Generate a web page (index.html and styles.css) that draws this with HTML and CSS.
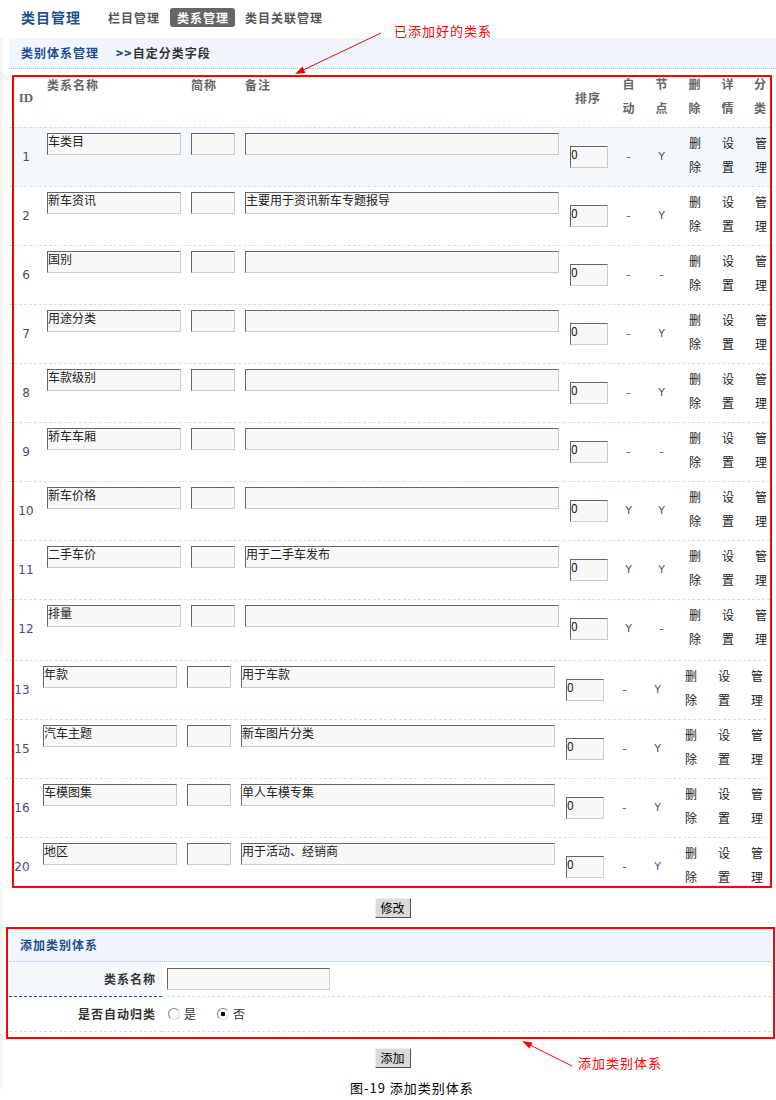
FILE: index.html
```html
<!DOCTYPE html>
<html lang="zh-CN">
<head>
<meta charset="utf-8">
<title>类目管理</title>
<link rel="stylesheet" href="styles.css">
</head>
<body>
<div class="page">
  <header class="topbar">
    <span class="title">类目管理</span>
    <nav class="tabs">
      <a class="tab">栏目管理</a>
      <a class="tab active">类系管理</a>
      <a class="tab">类目关联管理</a>
    </nav>
  </header>

  <section class="sec1">
    <div class="crumb"><span class="crumb-main">类别体系管理</span><span class="crumb-sub"><b>&gt;&gt;</b>自定分类字段</span></div>
    <div class="grid">
      <div class="row head">
        <div class="c hid">ID</div>
        <div class="c top l4">类系名称</div>
        <div class="c top l5">简称</div>
        <div class="c top l5">备注</div>
        <div class="c">排序</div>
        <div class="c"><div class="stack">自动</div></div>
        <div class="c"><div class="stack">节点</div></div>
        <div class="c"><div class="stack">删除</div></div>
        <div class="c"><div class="stack">详情</div></div>
        <div class="c last"><div class="stack">分类</div></div>
      </div>

      <div class="row hl">
        <div class="c id">1</div>
        <div class="c top l4"><input class="inp w-name" value="车类目"></div>
        <div class="c top l5"><input class="inp w-short" value=""></div>
        <div class="c top l5"><input class="inp w-note" value=""></div>
        <div class="c sort"><input class="inp w-sort" value="0"></div>
        <div class="c dash">-</div>
        <div class="c yes">Y</div>
        <div class="c"><div class="stack">删除</div></div>
        <div class="c"><div class="stack">设置</div></div>
        <div class="c last"><div class="stack">管理</div></div>
      </div>

      <div class="row">
        <div class="c id">2</div>
        <div class="c top l4"><input class="inp w-name" value="新车资讯"></div>
        <div class="c top l5"><input class="inp w-short" value=""></div>
        <div class="c top l5"><input class="inp w-note" value="主要用于资讯新车专题报导"></div>
        <div class="c sort"><input class="inp w-sort" value="0"></div>
        <div class="c dash">-</div>
        <div class="c yes">Y</div>
        <div class="c"><div class="stack">删除</div></div>
        <div class="c"><div class="stack">设置</div></div>
        <div class="c last"><div class="stack">管理</div></div>
      </div>

      <div class="row">
        <div class="c id">6</div>
        <div class="c top l4"><input class="inp w-name" value="国别"></div>
        <div class="c top l5"><input class="inp w-short" value=""></div>
        <div class="c top l5"><input class="inp w-note" value=""></div>
        <div class="c sort"><input class="inp w-sort" value="0"></div>
        <div class="c dash">-</div>
        <div class="c dash">-</div>
        <div class="c"><div class="stack">删除</div></div>
        <div class="c"><div class="stack">设置</div></div>
        <div class="c last"><div class="stack">管理</div></div>
      </div>

      <div class="row">
        <div class="c id">7</div>
        <div class="c top l4"><input class="inp w-name" value="用途分类"></div>
        <div class="c top l5"><input class="inp w-short" value=""></div>
        <div class="c top l5"><input class="inp w-note" value=""></div>
        <div class="c sort"><input class="inp w-sort" value="0"></div>
        <div class="c dash">-</div>
        <div class="c yes">Y</div>
        <div class="c"><div class="stack">删除</div></div>
        <div class="c"><div class="stack">设置</div></div>
        <div class="c last"><div class="stack">管理</div></div>
      </div>

      <div class="row">
        <div class="c id">8</div>
        <div class="c top l4"><input class="inp w-name" value="车款级别"></div>
        <div class="c top l5"><input class="inp w-short" value=""></div>
        <div class="c top l5"><input class="inp w-note" value=""></div>
        <div class="c sort"><input class="inp w-sort" value="0"></div>
        <div class="c dash">-</div>
        <div class="c yes">Y</div>
        <div class="c"><div class="stack">删除</div></div>
        <div class="c"><div class="stack">设置</div></div>
        <div class="c last"><div class="stack">管理</div></div>
      </div>

      <div class="row">
        <div class="c id">9</div>
        <div class="c top l4"><input class="inp w-name" value="轿车车厢"></div>
        <div class="c top l5"><input class="inp w-short" value=""></div>
        <div class="c top l5"><input class="inp w-note" value=""></div>
        <div class="c sort"><input class="inp w-sort" value="0"></div>
        <div class="c dash">-</div>
        <div class="c dash">-</div>
        <div class="c"><div class="stack">删除</div></div>
        <div class="c"><div class="stack">设置</div></div>
        <div class="c last"><div class="stack">管理</div></div>
      </div>

      <div class="row">
        <div class="c id">10</div>
        <div class="c top l4"><input class="inp w-name" value="新车价格"></div>
        <div class="c top l5"><input class="inp w-short" value=""></div>
        <div class="c top l5"><input class="inp w-note" value=""></div>
        <div class="c sort"><input class="inp w-sort" value="0"></div>
        <div class="c yes">Y</div>
        <div class="c yes">Y</div>
        <div class="c"><div class="stack">删除</div></div>
        <div class="c"><div class="stack">设置</div></div>
        <div class="c last"><div class="stack">管理</div></div>
      </div>

      <div class="row">
        <div class="c id">11</div>
        <div class="c top l4"><input class="inp w-name" value="二手车价"></div>
        <div class="c top l5"><input class="inp w-short" value=""></div>
        <div class="c top l5"><input class="inp w-note" value="用于二手车发布"></div>
        <div class="c sort"><input class="inp w-sort" value="0"></div>
        <div class="c yes">Y</div>
        <div class="c yes">Y</div>
        <div class="c"><div class="stack">删除</div></div>
        <div class="c"><div class="stack">设置</div></div>
        <div class="c last"><div class="stack">管理</div></div>
      </div>

      <div class="row">
        <div class="c id">12</div>
        <div class="c top l4"><input class="inp w-name" value="排量"></div>
        <div class="c top l5"><input class="inp w-short" value=""></div>
        <div class="c top l5"><input class="inp w-note" value=""></div>
        <div class="c sort"><input class="inp w-sort" value="0"></div>
        <div class="c yes">Y</div>
        <div class="c dash">-</div>
        <div class="c"><div class="stack">删除</div></div>
        <div class="c"><div class="stack">设置</div></div>
        <div class="c last"><div class="stack">管理</div></div>
      </div>
    </div>
  </section>

  <section class="sec2">
    <div class="grid">
      <div class="row">
        <div class="c id">13</div>
        <div class="c top l4"><input class="inp w-name" value="年款"></div>
        <div class="c top l5"><input class="inp w-short" value=""></div>
        <div class="c top l5"><input class="inp w-note" value="用于车款"></div>
        <div class="c sort"><input class="inp w-sort" value="0"></div>
        <div class="c dash">-</div>
        <div class="c yes">Y</div>
        <div class="c"><div class="stack">删除</div></div>
        <div class="c"><div class="stack">设置</div></div>
        <div class="c last"><div class="stack">管理</div></div>
      </div>

      <div class="row">
        <div class="c id">15</div>
        <div class="c top l4"><input class="inp w-name" value="汽车主题"></div>
        <div class="c top l5"><input class="inp w-short" value=""></div>
        <div class="c top l5"><input class="inp w-note" value="新车图片分类"></div>
        <div class="c sort"><input class="inp w-sort" value="0"></div>
        <div class="c dash">-</div>
        <div class="c yes">Y</div>
        <div class="c"><div class="stack">删除</div></div>
        <div class="c"><div class="stack">设置</div></div>
        <div class="c last"><div class="stack">管理</div></div>
      </div>

      <div class="row">
        <div class="c id">16</div>
        <div class="c top l4"><input class="inp w-name" value="车模图集"></div>
        <div class="c top l5"><input class="inp w-short" value=""></div>
        <div class="c top l5"><input class="inp w-note" value="单人车模专集"></div>
        <div class="c sort"><input class="inp w-sort" value="0"></div>
        <div class="c dash">-</div>
        <div class="c yes">Y</div>
        <div class="c"><div class="stack">删除</div></div>
        <div class="c"><div class="stack">设置</div></div>
        <div class="c last"><div class="stack">管理</div></div>
      </div>

      <div class="row">
        <div class="c id">20</div>
        <div class="c top l4"><input class="inp w-name" value="地区"></div>
        <div class="c top l5"><input class="inp w-short" value=""></div>
        <div class="c top l5"><input class="inp w-note" value="用于活动、经销商"></div>
        <div class="c sort"><input class="inp w-sort" value="0"></div>
        <div class="c dash">-</div>
        <div class="c yes">Y</div>
        <div class="c"><div class="stack">删除</div></div>
        <div class="c"><div class="stack">设置</div></div>
        <div class="c last"><div class="stack">管理</div></div>
      </div>
    </div>
  </section>

  <section class="sec3">
    <div class="btn-row"><button class="btn">修改</button></div>
    <div class="form">
      <div class="form-title">添加类别体系</div>
      <div class="frow">
        <div class="flabel on">类系名称</div>
        <div class="fval"><input class="inp finput" value=""></div>
      </div>
      <div class="frow">
        <div class="flabel">是否自动归类</div>
        <div class="fval radios">
          <label class="ropt"><input class="radio" type="radio" name="auto">是</label>
          <label class="ropt"><input class="radio" type="radio" name="auto" checked>否</label>
        </div>
      </div>
    </div>
    <div class="btn-row2"><button class="btn">添加</button></div>
    <p class="caption">图-19 添加类别体系</p>
  </section>

  <div class="redbox rb1"></div>
  <div class="redbox rb2"></div>
  <div class="note n1">已添加好的类系</div>
  <div class="note n2">添加类别体系</div>
  <svg class="arrows" width="776" height="1100" viewBox="0 0 776 1100">
    <line x1="381" y1="33" x2="301" y2="71" stroke="#f00" stroke-width="1"/>
    <polygon points="295,74 305.5,72.9 302.5,66.5" fill="#f00"/>
    <line x1="572" y1="1066" x2="528" y2="1044" stroke="#f00" stroke-width="1"/>
    <polygon points="522,1041 532.5,1042.4 529.4,1048.6" fill="#f00"/>
  </svg>
</div>
</body>
</html>
```

FILE: styles.css
```css
* { box-sizing: border-box; }

body {
  margin: 0;
  background: #fff;
  font: 12px/1.4 "Noto Sans CJK SC", "Noto Sans", sans-serif;
  color: #333;
}

.page {
  position: relative;
  width: 776px;
  height: 1100px;
  overflow: hidden;
}

/* top bar */
.topbar {
  height: 38px;
  display: flex;
  align-items: center;
  padding: 0 0 3px 21px;
}
.title {
  font-size: 14px;
  font-weight: bold;
  letter-spacing: 1px;
  color: #1b4f93;
  margin-right: 27px;
}
.tabs { display: flex; gap: 10px; align-items: center; }
.tab {
  font-weight: bold;
  letter-spacing: 1px;
  color: #555;
  height: 19px;
  line-height: 19px;
  text-decoration: none;
}
.tab.active {
  background: #666;
  color: #fff;
  border-radius: 3px;
  padding: 0 6px 0 7px;
}

/* section 1 */
.sec1 {
  height: 614px;
  overflow: hidden;
  border-left: 3px solid #f4f4f4;
  padding-left: 6px;
}
.crumb {
  height: 31px;
  background: #f1f6fd;
  border-bottom: 1px dotted #8fc6e8;
  display: flex;
  align-items: center;
  padding-left: 12px;
  font-weight: bold;
  letter-spacing: 1px;
}
.crumb-main { color: #1b4f93; }
.crumb-sub { margin-left: 17px; color: #333; }
.crumb-sub b { color: #1b4f93; }

/* grid table */
.grid { width: 761px; }
.row {
  display: grid;
  grid-template-columns: 34px 143px 54px 324px 48px 33px 33px 33px 33px 26px;
  height: 59px;
  border-top: 1px dashed #c9e3f3;
}
.row.head {
  height: 58px;
  border-top: 0;
  color: #666;
  font-weight: bold;
  letter-spacing: 1px;
}
.row.hl { background: #f4f8fd; }

.c {
  display: flex;
  align-items: center;
  justify-content: center;
  min-width: 0;
  white-space: normal;
}
.c.top { align-items: flex-start; justify-content: flex-start; padding-top: 5px; }
.row.head .c.top { padding-top: 6px; line-height: 20px; }
.c.l4 { padding-left: 4px; }
.c.l5 { padding-left: 5px; }
.c.sort { justify-content: flex-start; padding-left: 6px; }
.c.last { justify-content: flex-start; padding-left: 10px; }

.stack {
  width: 14px;
  margin-left: 3px;
  line-height: 24px;
  padding-bottom: 4px;
  text-align: left;
  color: #222;
}
.c.last .stack { margin-left: 1px; }
.row.head .stack { color: #666; margin-left: 2px; }
.row.head .c.last .stack { margin-left: 0; }

.hid {
  font-family: "Liberation Serif", serif;
  font-size: 13px;
  letter-spacing: 0;
}
.id {
  font-family: "DejaVu Sans", sans-serif;
  color: #4a4a7c;
}
.dash { font-family: "DejaVu Sans", sans-serif; color: #666; }
.yes { font-family: "DejaVu Sans", sans-serif; color: #5a4a8a; font-size: 11px; }

/* inputs */
.inp {
  display: block;
  height: 22px;
  margin: 0;
  border: 1px solid;
  border-color: #666 #ccc #ccc #666;
  background: #f8f8f8;
  padding: 0 0 8px 0;
  font: 12px/12px "Noto Sans CJK SC", sans-serif;
  color: #222;
  outline: none;
}
.w-name { width: 134px; }
.w-short { width: 44px; }
.w-note { width: 314px; }
.w-sort { width: 38px; }

/* section 2 */
.sec2 {
  margin-top: 8px;
  height: 229px;
  overflow: hidden;
  padding-left: 5px;
}

/* section 3 */
.sec3 {
  border-left: 3px solid #f4f4f4;
  padding-left: 6px;
  height: 200px;
}
.btn-row {
  display: flex;
  justify-content: center;
  padding-top: 9px;
}
.btn-row2 {
  display: flex;
  justify-content: center;
  margin-top: 16px;
}
.btn {
  width: 36px;
  height: 20px;
  padding: 0;
  font: 12px/18px "Noto Sans CJK SC", sans-serif;
  color: #000;
  background: #d9d9d9;
  border: 1px solid;
  border-color: #f0f0f0 #555 #555 #f0f0f0;
}

.form { width: 762px; margin-top: 12px; }
.form-title {
  height: 32px;
  background: #f1f6fd;
  border-bottom: 1px dotted #a3c3de;
  padding-left: 11px;
  display: flex;
  align-items: center;
  font-weight: bold;
  letter-spacing: 1px;
  color: #1b4f93;
}
.frow { display: flex; height: 35px; }
.flabel {
  width: 153px;
  border-bottom: 1px dashed #c9e3f3;
  display: flex;
  align-items: center;
  justify-content: flex-end;
  padding-right: 6px;
  font-weight: bold;
  letter-spacing: 1px;
  color: #333;
}
.flabel.on {
  background: #f4f8fd;
  border-bottom-color: #1d4e8f;
}
.fval {
  flex: 1;
  border-bottom: 1px dashed #c9e3f3;
  display: flex;
  align-items: center;
  padding-left: 5px;
}
.finput { width: 163px; }

.radios { padding-left: 6px; }
.ropt {
  display: flex;
  align-items: center;
  gap: 4px;
  margin-right: 21px;
  color: #333;
}
.radio {
  appearance: none;
  -webkit-appearance: none;
  width: 12px;
  height: 12px;
  margin: 0;
  border: 1px solid;
  border-color: #808080 #d8d8d8 #d8d8d8 #808080;
  border-radius: 50%;
  background: #fff;
}
.radio:checked {
  background: radial-gradient(circle, #000 0, #000 2px, #fff 2.6px);
}

.caption {
  margin: 10px 0 0;
  padding-left: 341px;
  line-height: 20px;
  font-size: 13px;
  letter-spacing: 1px;
  color: #000;
}

/* annotations */
.redbox {
  position: absolute;
  border: 2px solid #f00;
  pointer-events: none;
}
.rb1 { left: 12px; top: 75px; width: 760px; height: 813px; }
.rb2 { left: 6px; top: 927px; width: 769px; height: 112px; }
.note {
  position: absolute;
  color: #f00;
  font-size: 13px;
  line-height: 14px;
  letter-spacing: 1px;
  white-space: nowrap;
}
.n1 { left: 394px; top: 24px; }
.n2 { left: 578px; top: 1056px; }
.arrows {
  position: absolute;
  left: 0;
  top: 0;
  pointer-events: none;
}
```
